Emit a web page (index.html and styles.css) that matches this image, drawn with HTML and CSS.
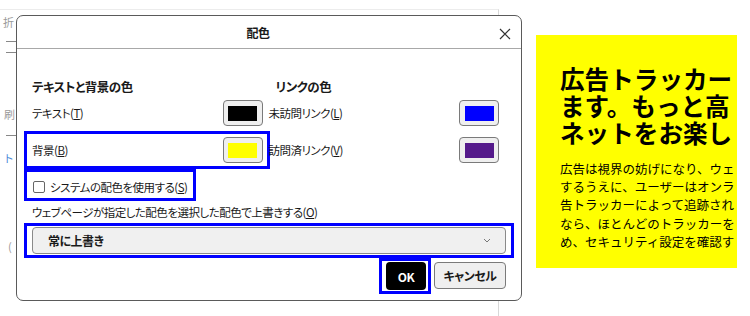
FILE: index.html
```html
<!DOCTYPE html>
<html>
<head>
	<meta charset="utf-8">
	<title>配色</title>
	<link rel="stylesheet" href="styles.css">
</head>
<body>
	<div class="page">
		<span class="frag frag_1">折</span>
		<span class="rule rule_1"></span>
		<span class="rule rule_2"></span>
		<span class="frag frag_2">刷</span>
		<span class="rule rule_3"></span>
		<span class="frag frag_3">ト</span>
		<span class="frag frag_4">(</span>
	</div>

	<div class="ad">
		<div class="ad_title">広告トラッカー<br>ます。もっと高<br>ネットをお楽し</div>
		<div class="ad_text">広告は視界の妨げになり、ウェ<br>するうえに、ユーザーはオンラ<br>告トラッカーによって追跡され<br>なら、ほとんどのトラッカーを<br>め、セキュリティ設定を確認す</div>
	</div>

	<div class="dialog">
		<div class="title_bar">
			<span class="title">配色</span>
			<svg class="close" width="12" height="12" viewBox="0 0 12 12">
				<path d="M1 1L11 11M11 1L1 11" stroke="#333" stroke-width="1.2" fill="none"/>
			</svg>
		</div>
		<div class="content">
			<div class="columns">
				<div class="col">
					<div class="col_head">テキストと背景の色</div>
					<div class="row">
						<span>テキスト(<u>T</u>)</span>
						<span class="swatch_btn"><span class="swatch black"></span></span>
					</div>
					<div class="row mark">
						<span>背景(<u>B</u>)</span>
						<span class="swatch_btn"><span class="swatch yellow"></span></span>
					</div>
					<div class="check_row mark">
						<span class="checkbox"></span>
						<span>システムの配色を使用する(<u>S</u>)</span>
					</div>
				</div>
				<div class="col">
					<div class="col_head link_head">リンクの色</div>
					<div class="row">
						<span>未訪問リンク(<u>L</u>)</span>
						<span class="swatch_btn"><span class="swatch blue"></span></span>
					</div>
					<div class="row visited">
						<span>訪問済リンク(<u>V</u>)</span>
						<span class="swatch_btn"><span class="swatch purple"></span></span>
					</div>
				</div>
			</div>
			<div class="override_label">ウェブページが指定した配色を選択した配色で上書きする(<u>O</u>)</div>
			<div class="select_wrap mark">
				<div class="select">
					<span>常に上書き</span>
					<svg width="8" height="5" viewBox="0 0 8 5">
						<path d="M1 1L4 4L7 1" stroke="#777" stroke-width="1" fill="none"/>
					</svg>
				</div>
			</div>
			<div class="buttons">
				<div class="ok_wrap mark">
					<span class="btn ok">OK</span>
				</div>
				<span class="btn cancel">キャンセル</span>
			</div>
		</div>
	</div>
</body>
</html>
```

FILE: styles.css
```css
* {
	margin: 0;
	padding: 0;
	box-sizing: border-box;
}
body {
	position: relative;
	width: 750px;
	height: 316px;
	overflow: hidden;
	background: #fff;
	font-family: "Noto Sans CJK JP", "Noto Sans", sans-serif;
	color: #1a1a1a;
}
.page {
	position: absolute;
	left: 0;
	top: 9px;
	width: 499px;
	height: 307px;
	border-top: 1px solid #ececec;
	border-right: 1px solid #d8d8d8;
}
.frag {
	position: absolute;
	font-size: 11px;
	color: #9a9a9a;
}
.frag_1 { left: 3px; top: 4px; }
.frag_2 { left: 4px; top: 96px; }
.frag_3 { left: 3px; top: 140px; color: #4a8ad8; }
.frag_4 { left: 8px; top: 228px; }
.rule {
	position: absolute;
	left: 6px;
	width: 10px;
	height: 1px;
	background: #888;
}
.rule_1 { top: 31px; }
.rule_2 { top: 42px; }
.rule_3 { top: 125px; }

/* 右の広告 */
.ad {
	margin: 35px 0 0 536px;
	width: 201px;
	height: 233px;
	padding: 30px 0 0 24px;
	background: #ffff00;
	overflow: hidden;
	white-space: nowrap;
	color: #000;
}
.ad_title {
	font-size: 24.6px;
	font-weight: bold;
	line-height: 27px;
}
.ad_text {
	margin-top: 14px;
	font-size: 12.5px;
	line-height: 18.2px;
}

/* ダイアログ */
.dialog {
	position: absolute;
	left: 16px;
	top: 15px;
	width: 506px;
	height: 286px;
	background: #fff;
	border: 1px solid #5a5a5a;
	border-radius: 7px;
	font-size: 11.5px;
	letter-spacing: -0.5px;
	font-feature-settings: "palt";
	white-space: nowrap;
}
.title_bar {
	display: flex;
	align-items: center;
	justify-content: center;
	height: 33px;
	border-bottom: 1px solid #a8a8a8;
	position: relative;
}
.title {
	margin-right: 22px;
	font-size: 12px;
	font-weight: bold;
}
.close {
	position: absolute;
	right: 10px;
	top: 12px;
}
.content {
	padding: 29px 15px 0 15px;
}
.columns {
	display: flex;
	gap: 6px;
	width: 467px;
}
.col {
	flex: 1;
}
.col_head {
	height: 18px;
	line-height: 18px;
	font-size: 12.5px;
	font-weight: bold;
}
.link_head {
	padding-left: 7px;
}
.row {
	display: flex;
	align-items: center;
	justify-content: space-between;
	height: 26px;
	margin-top: 4px;
	line-height: 18px;
}
.row.mark {
	margin: 5px -7px 0 -8px;
	height: 38px;
	padding: 0 4px 0 5px;
}
.row.visited {
	margin-top: 11px;
}
.mark {
	border: 3px solid #0000ff;
}
.swatch_btn {
	display: flex;
	align-items: center;
	justify-content: center;
	width: 40px;
	height: 26px;
	border: 1px solid #7a7a7a;
	border-radius: 4px;
	background: #efefef;
}
.swatch {
	width: 29px;
	height: 15px;
}
.black { background: #000; }
.yellow { background: #ffff00; }
.blue { background: #0000ff; }
.purple { background: #551a8b; }
.check_row {
	display: flex;
	align-items: center;
	gap: 5px;
	width: 172px;
	height: 32px;
	margin-left: -8px;
	padding: 3px 0 0 6px;
}
.checkbox {
	width: 12px;
	height: 12px;
	border: 1px solid #666;
	border-radius: 2px;
	background: #fff;
}
.override_label {
	margin-top: 2px;
	height: 19px;
	line-height: 18px;
}
.select_wrap {
	margin: 1px -8px 0 -8px;
	padding: 1px 5px;
}
.select {
	display: flex;
	align-items: center;
	justify-content: space-between;
	height: 27px;
	padding: 0 14px 0 15px;
	background: #f0f0f0;
	border: 1px solid #8a8a8a;
	border-radius: 4px;
	font-size: 12px;
	font-weight: bold;
}
.buttons {
	display: flex;
	justify-content: flex-end;
	align-items: flex-start;
}
.ok_wrap {
	padding: 1px 2px 1px 4px;
	margin-right: 3px;
}
.btn {
	display: flex;
	align-items: center;
	justify-content: center;
	height: 28px;
	border-radius: 4px;
	font-size: 12px;
	font-weight: bold;
}
.ok {
	width: 40px;
	background: #000;
	color: #fff;
}
.cancel {
	margin-top: 4px;
	width: 72px;
	height: 27px;
	background: #efefef;
	border: 1px solid #7a7a7a;
}
```
